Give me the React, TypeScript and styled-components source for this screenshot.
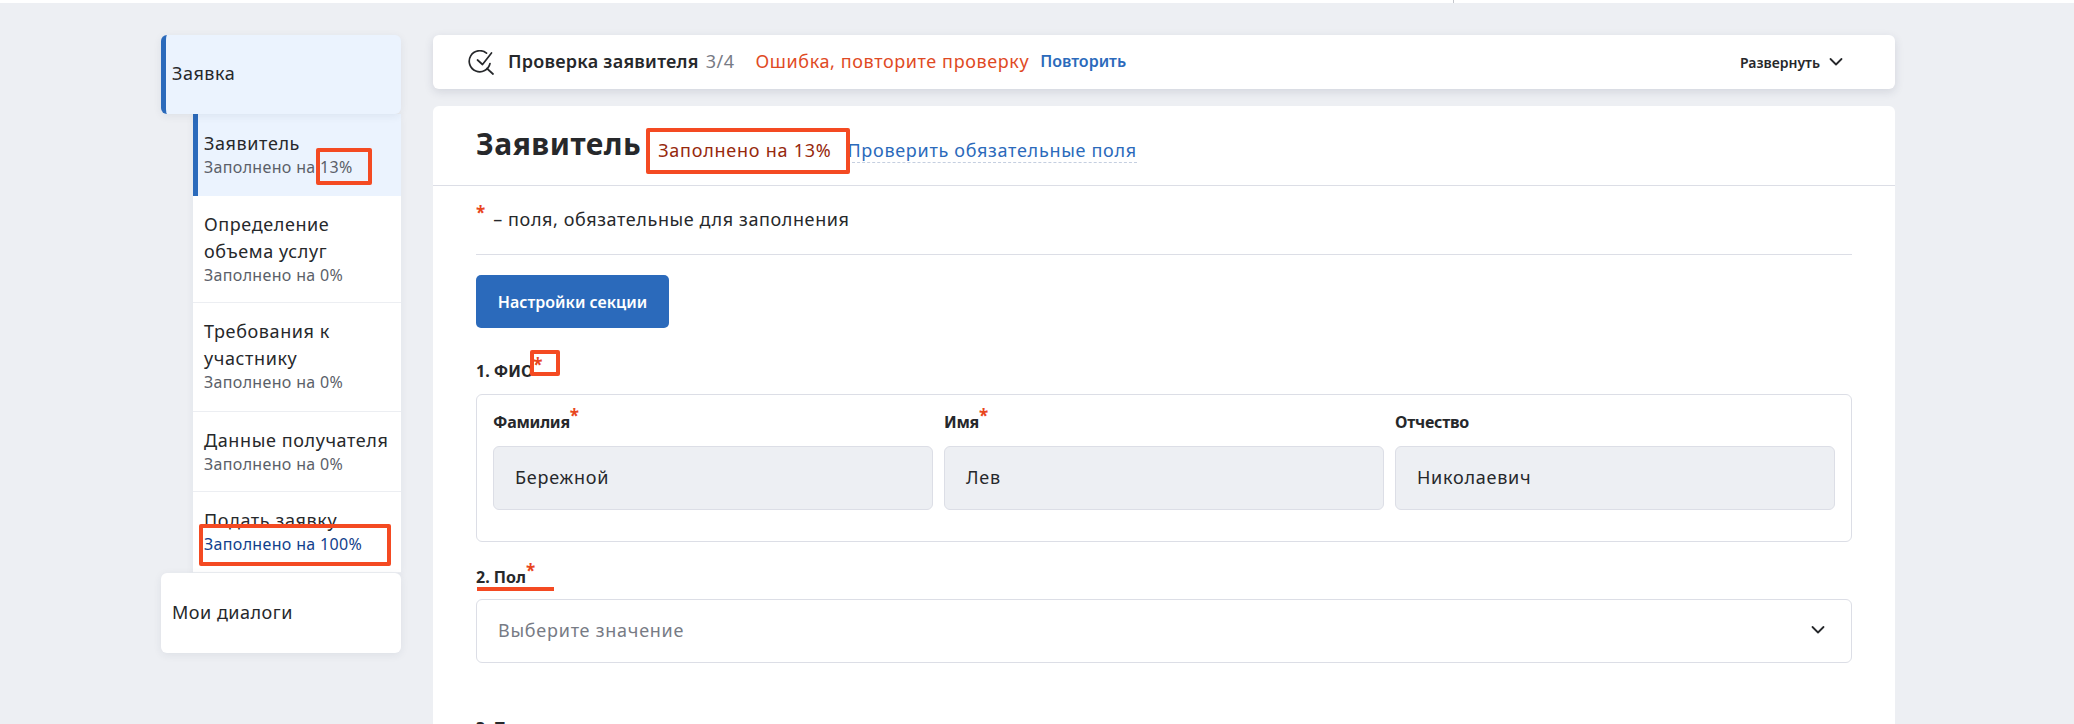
import React from "react";
import styled, { createGlobalStyle } from "styled-components";

const GlobalStyle = createGlobalStyle`
  html, body {
    margin: 0;
    padding: 0;
    height: 724px;
    overflow: hidden;
    background: #edeff3;
    font-family: "Noto Sans", "Liberation Sans", sans-serif;
    color: #26282b;
  }
  * {
    box-sizing: border-box;
  }
`;

const Page = styled.div`
  position: relative;
  width: 2074px;
  height: 724px;
  overflow: hidden;
`;

const TopStrip = styled.div`
  position: relative;
  height: 3px;
  background: #fff;
  &::after {
    content: "";
    position: absolute;
    left: 1453px;
    top: 0;
    width: 1px;
    height: 3px;
    background: #c4c6cc;
  }
`;

const Layout = styled.div`
  display: flex;
  gap: 32px;
  padding: 32px 179px 0 161px;
`;

const Sidebar = styled.aside`
  width: 240px;
  flex: none;
  display: flex;
  flex-direction: column;
`;

const SideCard = styled.div<{ $active?: boolean }>`
  height: ${(p) => (p.$active ? "79px" : "80px")};
  padding: 0 0 3px ${(p) => (p.$active ? "6px" : "11px")};
  display: flex;
  align-items: center;
  font-size: 18px;
  letter-spacing: 0.5px;
  background: ${(p) => (p.$active ? "#ebf3fe" : "#fff")};
  border-radius: 6px;
  border-left: ${(p) => (p.$active ? "5px solid #2b6abb" : "none")};
  box-shadow: 0 2px 8px rgba(40, 50, 80, 0.08);
  position: relative;
  z-index: 1;
`;

const SubList = styled.div`
  margin-left: 32px;
  display: flex;
  flex-direction: column;
  background: #fff;
  box-shadow: 0 2px 8px rgba(40, 50, 80, 0.06);
`;

const SubItem = styled.div<{ $active?: boolean; $h: number }>`
  height: ${(p) => p.$h}px;
  padding: ${(p) => (p.$active ? "16px 0 0 6px" : "15px 0 0 11px")};
  background: ${(p) => (p.$active ? "#ebf3fe" : "#fff")};
  border-left: ${(p) => (p.$active ? "5px solid #2b6abb" : "none")};
  box-shadow: ${(p) => (p.$active ? "none" : "inset 0 -1px 0 #eceef2")};
`;

const SubTitle = styled.div`
  font-size: 18px;
  line-height: 27px;
  letter-spacing: 0.6px;
`;

const SubNote = styled.div<{ $done?: boolean }>`
  font-size: 16px;
  line-height: 20px;
  letter-spacing: 0.33px;
  color: ${(p) => (p.$done ? "#123f8c" : "#5b5f69")};
`;

const Main = styled.main`
  flex: 1;
  min-width: 0;
  display: flex;
  flex-direction: column;
  gap: 17px;
`;

const CheckBar = styled.div`
  height: 54px;
  padding: 0 52px 0 35px;
  display: flex;
  align-items: center;
  background: #fff;
  border-radius: 6px;
  box-shadow: 0 3px 10px rgba(40, 50, 80, 0.13);
`;

const BarText = styled.span`
  margin-top: -2px;
  font-size: 18px;
  letter-spacing: 0.5px;
`;

const CheckTitle = styled(BarText)`
  margin-left: 14px;
  font-weight: 600;
  letter-spacing: 0.25px;
`;

const CheckCount = styled(BarText)`
  margin-left: 7px;
  color: #777b85;
`;

const CheckError = styled(BarText)`
  margin-left: 21px;
  color: #df4a24;
  letter-spacing: 0.6px;
`;

const CheckRetry = styled(BarText)`
  margin-left: 11px;
  font-size: 16px;
  font-weight: 600;
  letter-spacing: 0;
  color: #2b6abb;
`;

const Expand = styled.div`
  margin-left: auto;
  display: flex;
  align-items: center;
  gap: 9px;
  font-size: 14px;
  font-weight: 600;
`;

const FormCard = styled.div`
  height: 640px;
  background: #fff;
  border-radius: 6px 6px 0 0;
`;

const FormHead = styled.div`
  height: 80px;
  padding: 20px 43px 0;
  display: flex;
  align-items: flex-start;
  border-bottom: 1px solid #dcdee6;
`;

const PageTitle = styled.h1`
  margin: 0;
  font-size: 30px;
  line-height: 36px;
  font-weight: 700;
  letter-spacing: 0.5px;
`;

const HeadNote = styled.span`
  margin: 9px 0 0 17px;
  font-size: 18px;
  line-height: 30px;
  letter-spacing: 0.75px;
  color: #96280c;
`;

const HeadLink = styled.span`
  margin: 12px 0 0 16px;
  font-size: 18px;
  line-height: 24px;
  letter-spacing: 0.7px;
  color: #2b6abb;
  border-bottom: 1px dashed #c5cfe0;
`;

const FormBody = styled.div`
  padding: 0 43px;
`;

const Legend = styled.div`
  height: 69px;
  font-size: 18px;
  line-height: 67px;
  letter-spacing: 0.6px;
  border-bottom: 1px solid #dcdee6;
`;

const Star = styled.sup`
  color: #e8461d;
  font-size: 17px;
  font-weight: 700;
  line-height: 0;
  letter-spacing: 0;
`;

const LegendStar = styled(Star)`
  margin-right: 8px;
`;

const PrimaryButton = styled.button`
  display: block;
  width: 193px;
  height: 53px;
  margin-top: 20px;
  border: 0;
  border-radius: 5px;
  background: #2b6abb;
  color: #fff;
  font: 600 16px "Noto Sans", sans-serif;
`;

const SectionLabel = styled.div<{ $top: number }>`
  margin-top: ${(p) => p.$top}px;
  height: 22px;
  font-size: 16px;
  line-height: 22px;
  font-weight: 700;
  letter-spacing: 0;
`;

const FieldSet = styled.div`
  margin-top: 12px;
  height: 148px;
  padding: 16px 16px 0;
  display: grid;
  grid-template-columns: repeat(3, 1fr);
  column-gap: 11px;
  border: 1px solid #dcdee6;
  border-radius: 6px;
`;

const FieldLabel = styled.div`
  height: 35px;
  font-size: 16px;
  line-height: 23px;
  font-weight: 700;
  letter-spacing: -0.25px;
`;

const ReadonlyInput = styled.div`
  height: 64px;
  padding: 0 0 2px 21px;
  display: flex;
  align-items: center;
  font-size: 18px;
  letter-spacing: 0.75px;
  background: #edeff3;
  border: 1px solid #dcdee6;
  border-radius: 6px;
`;

const Select = styled.div`
  margin-top: 11px;
  height: 64px;
  padding: 0 26px 2px 21px;
  display: flex;
  align-items: center;
  justify-content: space-between;
  font-size: 18px;
  letter-spacing: 0.75px;
  color: #777b85;
  border: 1px solid #dcdee6;
  border-radius: 6px;
`;

const Mark = styled.div<{ $x: number; $y: number; $w: number; $h: number }>`
  position: absolute;
  left: ${(p) => p.$x}px;
  top: ${(p) => p.$y}px;
  width: ${(p) => p.$w}px;
  height: ${(p) => p.$h}px;
  border: 4px solid #f44a22;
  border-radius: 2px;
`;

const Underline = styled.div`
  position: absolute;
  left: 477px;
  top: 587px;
  width: 77px;
  height: 4px;
  background: #f44a22;
`;

const subItems = [
  { title: ["Заявитель"], note: "Заполнено на 13%", h: 82, active: true },
  { title: ["Определение", "объема услуг"], note: "Заполнено на 0%", h: 107 },
  { title: ["Требования к", "участнику"], note: "Заполнено на 0%", h: 109 },
  { title: ["Данные получателя"], note: "Заполнено на 0%", h: 80 },
  { title: ["Подать заявку"], note: "Заполнено на 100%", h: 81, done: true },
];

const fields = [
  { label: "Фамилия", value: "Бережной", required: true },
  { label: "Имя", value: "Лев", required: true },
  { label: "Отчество", value: "Николаевич" },
];

const CheckIcon = () => (
  <svg width="26" height="25" viewBox="0 0 26 25" fill="none" stroke="#26282b" strokeWidth="1.7" strokeLinecap="round" strokeLinejoin="round">
    <path d="M18.5 3.2A10.5 10.5 0 1 0 22 13.5" />
    <path d="M9.5 10l5 4.5 9-11.5" />
    <path d="M19 18.5l6 5.5" />
  </svg>
);

const Chevron = ({ size }: { size: number }) => (
  <svg width={size} height={size} viewBox="0 0 14 14" fill="none" stroke="#26282b" strokeWidth="1.8" strokeLinecap="round" strokeLinejoin="round">
    <path d="M1.5 4l5.5 5.5L12.5 4" />
  </svg>
);

export default function App() {
  return (
    <Page>
      <GlobalStyle />
      <TopStrip />
      <Layout>
        <Sidebar>
          <SideCard $active>Заявка</SideCard>
          <SubList>
            {subItems.map((item) => (
              <SubItem key={item.title[0]} $active={item.active} $h={item.h}>
                {item.title.map((line) => (
                  <SubTitle key={line}>{line}</SubTitle>
                ))}
                <SubNote $done={item.done}>{item.note}</SubNote>
              </SubItem>
            ))}
          </SubList>
          <SideCard>Мои диалоги</SideCard>
        </Sidebar>
        <Main>
          <CheckBar>
            <CheckIcon />
            <CheckTitle>Проверка заявителя</CheckTitle>
            <CheckCount>3/4</CheckCount>
            <CheckError>Ошибка, повторите проверку</CheckError>
            <CheckRetry>Повторить</CheckRetry>
            <Expand>
              Развернуть
              <Chevron size={14} />
            </Expand>
          </CheckBar>
          <FormCard>
            <FormHead>
              <PageTitle>Заявитель</PageTitle>
              <HeadNote>Заполнено на 13%</HeadNote>
              <HeadLink>Проверить обязательные поля</HeadLink>
            </FormHead>
            <FormBody>
              <Legend>
                <LegendStar>*</LegendStar>– поля, обязательные для заполнения
              </Legend>
              <PrimaryButton>Настройки секции</PrimaryButton>
              <SectionLabel $top={32}>
                1. ФИО<Star>*</Star>
              </SectionLabel>
              <FieldSet>
                {fields.map((f) => (
                  <div key={f.label}>
                    <FieldLabel>
                      {f.label}
                      {f.required && <Star>*</Star>}
                    </FieldLabel>
                    <ReadonlyInput>{f.value}</ReadonlyInput>
                  </div>
                ))}
              </FieldSet>
              <SectionLabel $top={24}>
                2. Пол<Star>*</Star>
              </SectionLabel>
              <Select>
                Выберите значение
                <Chevron size={14} />
              </Select>
              <SectionLabel $top={54}>3. Паспорт</SectionLabel>
            </FormBody>
          </FormCard>
        </Main>
      </Layout>
      <Mark $x={316} $y={148} $w={56} $h={37} />
      <Mark $x={199} $y={524} $w={192} $h={42} />
      <Mark $x={646} $y={128} $w={204} $h={46} />
      <Mark $x={530} $y={350} $w={30} $h={26} />
      <Underline />
    </Page>
  );
}
